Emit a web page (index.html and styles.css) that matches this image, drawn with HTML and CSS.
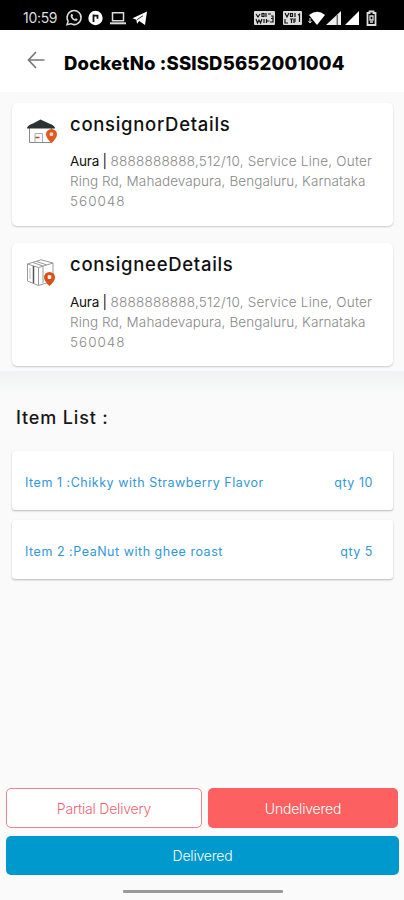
FILE: index.html
```html
<!DOCTYPE html>
<html lang="en">
<head>
<meta charset="utf-8">
<title>Docket details</title>
<link rel="stylesheet" href="styles.css">
</head>
<body>
<div class="status">
  <span class="clock">10:59</span>
  <svg class="status-left" width="84" height="18" viewBox="0 0 84 18" fill="none" stroke="#ddd">
    <path d="M2 15.7l1.1-3.5a7 7 0 1 1 2.6 2.5z" stroke-width="1.5"/>
    <path d="M6 5.4c1-.8 1.5-.3 2.1 1.3l-.7 1.1c.6 1.2 1.3 1.8 2.5 2.4l1-.9c1.700.5 2 1 1.300 2-2 2.200-8-2.500-6.200-5.900z" fill="#ddd" stroke="none"/>
    <circle cx="30.500" cy="9" r="7.200" fill="#fff" stroke="none"/>
    <path d="M28.500 13V5.600M28.500 6.700h4v3" stroke="#111" stroke-width="1.800"/>
    <path d="M47.500 3.800h11v8h-11z" stroke-width="1.500"/><path d="M45 14.300h16" stroke-width="2"/>
    <path d="M67.500 9.300L82 2.500 80 16l-5.800-4-2.200 2.700-.600-4z" fill="#fff" stroke="none"/>
    <path d="M72 10.700l6-4" stroke="#000" stroke-width=".8"/>
  </svg>
  <svg class="status-right" width="124" height="18" viewBox="0 0 124 18">
    <rect x="0" y="2" width="21" height="14" rx="1" fill="#ddd"/>
    <path d="M2 5l2 3 2-3M8 4.500h2v3H8zM12 4v4M14 5h3M2 10l1.500 4L5 11l1.500 3L8 10M10 10v4M12.500 10v4M12.500 12h3M17 7h2v2.500h-2M19 9v4h-3" fill="none" stroke="#111" stroke-width="1.200"/>
    <rect x="29" y="2" width="19" height="14" rx="1" fill="#ddd"/>
    <path d="M31 4l2 4 2-4M36.500 4.500h2v3h-2zM41 4v4M31 10v4h3M36 10h3M37.500 10v4M40 14v-4h2M40 12h2M44 6l1.500-1v8" fill="none" stroke="#111" stroke-width="1.200"/>
    <path d="M55 6q8.500-6.500 16 0l-8 10z" fill="#fff"/>
    <path d="M56 9v5M54.500 12l1.500 2 1.500-2" fill="none" stroke="#ddd" stroke-width="1"/>
    <path d="M72 16L87 2v14z" fill="#eee"/><path d="M83.200 6v10" stroke="#333" stroke-width="1"/>
    <path d="M91 16l14-14v14z" fill="#fff"/>
    <path d="M113.500 4h2V2.500h4V4h2v12h-8z" fill="none" stroke="#ddd" stroke-width="1.800"/>
    <path d="M116 7h3v4h-3zM116 13h3" fill="none" stroke="#ddd" stroke-width="1.300"/>
  </svg>
</div>
<header class="header">
  <svg class="back" width="18" height="18" viewBox="0 0 18 18" fill="none" stroke="#777" stroke-width="1.700"><path d="M9 1L1.500 9 9 17M1.500 9H17.500"/></svg>
  <h1>DocketNo :SSISD5652001004</h1>
</header>
<main class="main">
  <section class="card">
    <svg class="card-icon" width="32" height="28" viewBox="0 0 32 28">
      <path d="M2.500 9v14.500h22V9" fill="#fff" stroke="#888" stroke-width="1"/>
      <path d="M0 9.500Q0 6.500 6 4.500L13.500 .5 22 4.500q6 2 6 5z" fill="#2b3235"/>
      <path d="M8 23v-8.500h7.500v8.500M15.500 14.500v8.500" fill="none" stroke="#aaa" stroke-width="1"/>
      <path d="M8.500 18.500h4" stroke="#a64a3c" stroke-width="1.500"/>
      <path d="M24.500 24q-5.500-5-5.500-8.500a5.500 5.500 0 0 1 11 0q0 3.500-5.500 8.500z" fill="#e1591d"/>
      <rect x="22.700" y="13.500" width="3.500" height="3.500" rx="1" fill="#ffd9c7"/>
    </svg>
    <div class="card-body">
      <h2>consignorDetails</h2>
      <p><span class="name">Aura |</span> <span class="line-street">8888888888,512/10, Service Line, Outer</span><br><span class="line-city">Ring Rd, Mahadevapura, Bengaluru, Karnataka</span><br><span class="line-pin">560048</span></p>
    </div>
  </section>
  <section class="card">
    <svg class="card-icon" width="32" height="28" viewBox="0 0 32 28" fill="#fff" stroke="#999" stroke-width="1">
      <path d="M.500 5L14 .8 26 4v18l-14.500 4.500-11-4.500z"/>
      <path d="M.500 5l11 3.500v18M11.500 8.500L26 4M6 3.500l10 3.500v17M9.500 2.500l10 3.300" fill="none"/>
      <path d="M6.500 7v17" fill="none" stroke="#555" stroke-width="1.500"/>
      <path d="M3 9v11" stroke="#bbb"/>
      <path d="M22.500 27q-5.500-5-5.500-8.500a5.500 5.500 0 0 1 11 0q0 3.500-5.500 8.500z" fill="#d94f15" stroke="none"/>
      <rect x="20.700" y="16.300" width="3.600" height="3.600" rx="1" stroke="none"/>
    </svg>
    <div class="card-body">
      <h2>consigneeDetails</h2>
      <p><span class="name">Aura |</span> <span class="line-street">8888888888,512/10, Service Line, Outer</span><br><span class="line-city">Ring Rd, Mahadevapura, Bengaluru, Karnataka</span><br><span class="line-pin">560048</span></p>
    </div>
  </section>
</main>
<section class="items">
  <h2 class="items-title">Item List :</h2>
  <div class="item"><span>Item 1 :Chikky with Strawberry Flavor</span><span>qty 10</span></div>
  <div class="item"><span>Item 2 :PeaNut with ghee roast</span><span>qty 5</span></div>
</section>
<footer class="actions">
  <div class="row">
    <button class="btn partial">Partial Delivery</button>
    <button class="btn undelivered">Undelivered</button>
  </div>
  <button class="btn delivered">Delivered</button>
  <div class="home"></div>
</footer>
</body>
</html>
```
FILE: styles.css
```css
* { box-sizing: border-box; }
body {
  margin: 0;
  width: 404px;
  height: 900px;
  display: flex;
  flex-direction: column;
  overflow: hidden;
  background: #fafafa;
  font-family: Inter, "Liberation Sans", sans-serif;
}
h1, h2, p { margin: 0; }
.status {
  height: 30px;
  flex: none;
  display: flex;
  align-items: center;
  background: #000;
  padding: 5px 26px 0 23px;
  color: #ddd;
}
.clock { width: 42px; font-size: 14px; letter-spacing: -.3px; }
.status-right { margin-left: auto; }
.header {
  height: 62px;
  flex: none;
  display: flex;
  align-items: center;
  padding-left: 27px;
  background: #fff;
}
.back { margin-top: -2px; }
h1 {
  margin: 3px 0 0 19px;
  font-size: 18.5px;
  font-weight: 800;
  line-height: 24px;
  letter-spacing: .17px;
  color: #050505;
  white-space: nowrap;
}
.main {
  flex: none;
  height: 279px;
  display: flex;
  flex-direction: column;
  gap: 17px;
  padding: 11px 11px 0 12px;
}
.card {
  height: 123px;
  display: flex;
  padding: 9px 0 0 15px;
  background: #fff;
  border-radius: 5px;
  box-shadow: 0 1px 2px #00000033;
}
.card-icon { margin-top: 7px; flex: none; }
.card-body { margin-left: 11px; }
.card h2 {
  font-size: 18.5px;
  font-weight: 500;
  line-height: 24px;
  letter-spacing: .7px;
  color: #111;
}
.card p {
  margin-top: 15px;
  font-size: 13.5px;
  font-weight: 300;
  line-height: 20px;
  color: #888;
  white-space: nowrap;
}
.card + .card p { margin-top: 16px; }
.name { color: #111; font-weight: 400; letter-spacing: -.25px; }
.line-street { letter-spacing: .22px; }
.line-city { letter-spacing: .1px; }
.line-pin { letter-spacing: 1px; }
.items {
  flex: none;
  display: flex;
  flex-direction: column;
  padding: 34px 11px 0 12px;
  background: linear-gradient(#f0f3f3, #fafafa 24px);
}
.items-title {
  margin: 0 0 20px 4px;
  font-size: 18px;
  line-height: 26px;
  font-weight: 500;
  letter-spacing: .85px;
  color: #181818;
}
.item {
  height: 59px;
  margin-bottom: 10px;
  display: flex;
  align-items: center;
  justify-content: space-between;
  padding: 3px 20px 0 13px;
  font-size: 12.5px;
  font-weight: 400;
  letter-spacing: .53px;
  color: #3297d8;
  background: #fff;
  border-radius: 3px;
  box-shadow: 0 1px 2px #00000044;
  white-space: nowrap;
}
.actions {
  margin-top: auto;
  padding: 0 5px 7px 6px;
  display: flex;
  flex-direction: column;
}
.row { display: grid; grid-template-columns: 196px 190px; gap: 6px; margin-bottom: 8px; }
.btn {
  height: 40px;
  border: 0;
  border-radius: 5px;
  padding: 0;
  font: 300 14px Inter, "Liberation Sans", sans-serif;
  letter-spacing: -.2px;
  color: #fff;
}
.partial { background: #fff; color: #ef6570; border: 1px solid #ee858b; }
.undelivered { background: #fd6060; }
.delivered { background: #0099ce; height: 39px; margin-bottom: 1px; }
.home { width: 160px; height: 3px; margin: 14px 0 0 117px; background: #999; border-radius: 1px; }
```
